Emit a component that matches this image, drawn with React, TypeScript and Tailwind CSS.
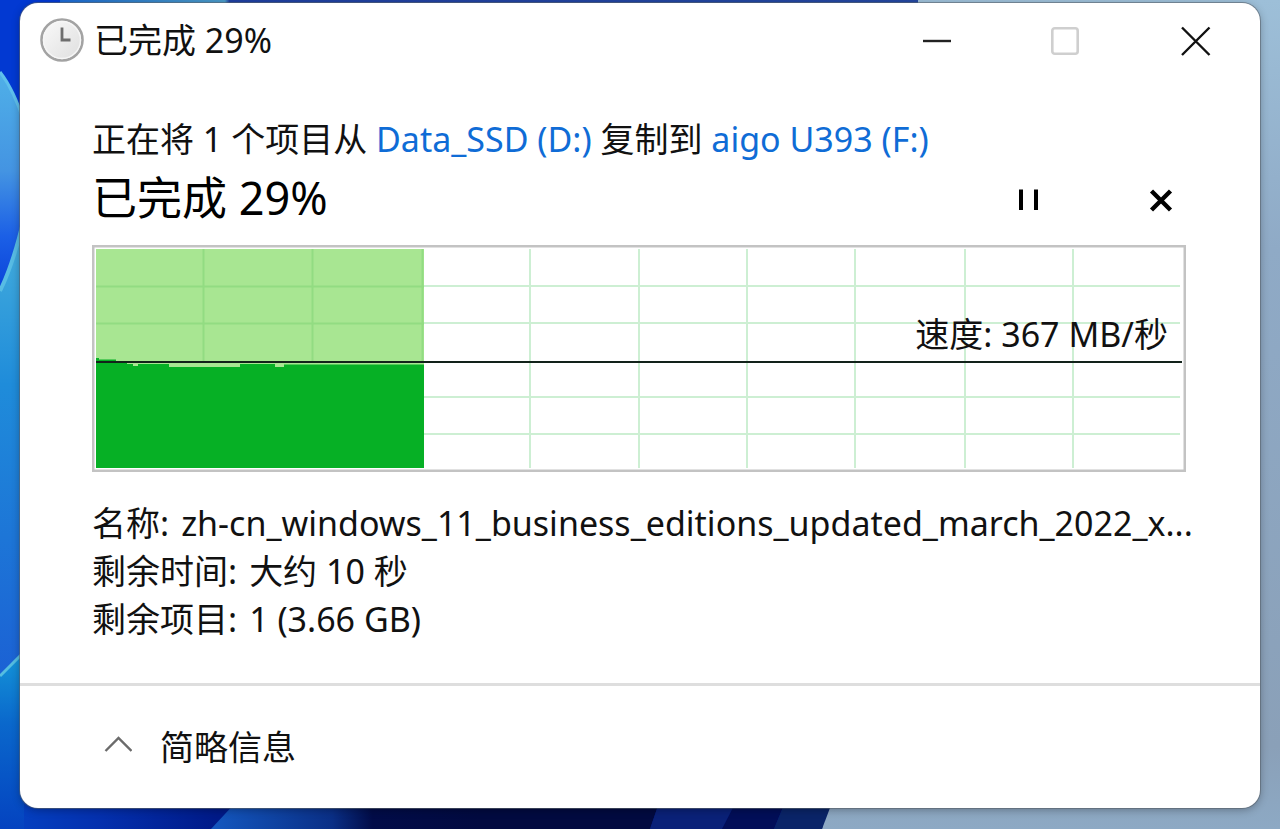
import React, { useState } from 'react';
import { clsx } from 'clsx';

const transfer = {
  progress: 29,
  source: 'Data_SSD (D:)',
  target: 'aigo U393 (F:)',
  speed: '367 MB/秒',
};

const details = [
  { label: '名称:', value: 'zh-cn_windows_11_business_editions_updated_march_2022_x...' },
  { label: '剩余时间:', value: '大约 10 秒' },
  { label: '剩余项目:', value: '1 (3.66 GB)' },
];

const columns = [111, 220, 329, 438, 547, 655, 763, 873, 981];
const rows = [41, 78, 152, 189];

function Wallpaper() {
  return (
    <svg
      className="absolute inset-0 h-full w-full"
      viewBox="0 0 1280 829"
      preserveAspectRatio="none"
      aria-hidden="true"
    >
      <defs>
        <linearGradient id="sky" x1="0" y1="0" x2="0" y2="1">
          <stop offset="0" stopColor="#9dbfd8" />
          <stop offset="0.3" stopColor="#8faac6" />
          <stop offset="0.9" stopColor="#8aa0b8" />
          <stop offset="1" stopColor="#8da9c4" />
        </linearGradient>
        <linearGradient id="topEdge" x1="0" y1="0" x2="1" y2="0">
          <stop offset="0" stopColor="#0a55e0" />
          <stop offset="0.12" stopColor="#2a78c8" />
          <stop offset="0.245" stopColor="#4a9ac8" />
          <stop offset="0.25" stopColor="#1f3fa0" />
          <stop offset="1" stopColor="#2448a0" />
        </linearGradient>
        <linearGradient id="bottomEdge" x1="0" y1="0" x2="1" y2="0">
          <stop offset="0" stopColor="#0443c4" />
          <stop offset="0.12" stopColor="#0430ae" />
          <stop offset="0.26" stopColor="#001a88" />
        </linearGradient>
        <linearGradient id="petal" x1="0" y1="0" x2="1" y2="0">
          <stop offset="0" stopColor="#1458c0" />
          <stop offset="0.45" stopColor="#0a2f86" />
          <stop offset="0.6" stopColor="#020c48" />
          <stop offset="1" stopColor="#020a40" />
        </linearGradient>
        <linearGradient id="leafTop" x1="0" y1="0" x2="0" y2="1">
          <stop offset="0" stopColor="#4fb0e8" />
          <stop offset="0.45" stopColor="#4494e2" />
          <stop offset="0.75" stopColor="#1b5fe6" />
          <stop offset="1" stopColor="#0a42d8" />
        </linearGradient>
        <linearGradient id="leafMiddle" x1="0" y1="0" x2="0" y2="1">
          <stop offset="0" stopColor="#48b0dc" />
          <stop offset="0.35" stopColor="#1f8cda" />
          <stop offset="1" stopColor="#1b5fd4" />
        </linearGradient>
        <linearGradient id="leafBottom" x1="0" y1="0" x2="0" y2="1">
          <stop offset="0" stopColor="#1596d8" />
          <stop offset="0.4" stopColor="#0a68cc" />
          <stop offset="1" stopColor="#0443c0" />
        </linearGradient>
      </defs>
      <rect width="1280" height="829" fill="url(#sky)" />
      <path d="M0 0H918V12H0Z" fill="url(#topEdge)" />
      <path d="M0 0H60V130H0Z" fill="#0239d2" />
      <path d="M0 780H833L822 829H0Z" fill="url(#bottomEdge)" />
      <path d="M238 800H480V829H211Z" fill="url(#petal)" />
      <path d="M480 800H660L650 829H480Z" fill="#020a40" />
      <path d="M660 800H737L722 829H650Z" fill="#0a2178" />
      <path d="M737 800H786L774 829H722Z" fill="#020e58" />
      <path d="M786 800H833L822 829H774Z" fill="#0a2468" />
      <path d="M0 72Q14 90 24 122V230Q14 262 0 292Z" fill="url(#leafTop)" />
      <path d="M0 72Q14 90 24 122" fill="none" stroke="#5fc0ec" strokeWidth="3" />
      <path d="M0 290V690L24 660V220Q12 262 0 290Z" fill="url(#leafMiddle)" />
      <path d="M0 291Q14 262 24 218" fill="none" stroke="#58bce4" strokeWidth="4" />
      <path d="M0 676L24 652V829H0Z" fill="url(#leafBottom)" />
      <path d="M0 676Q10 666 24 652" fill="none" stroke="#55bde0" strokeWidth="3" />
    </svg>
  );
}

function ClockIcon() {
  return (
    <svg className="h-11 w-11 shrink-0" viewBox="0 0 44 44" fill="none" aria-hidden="true">
      <defs>
        <linearGradient id="dial" x1="0" y1="0" x2="1" y2="1">
          <stop offset="0" stopColor="#fafafa" />
          <stop offset="1" stopColor="#dedede" />
        </linearGradient>
      </defs>
      <circle cx="22" cy="22" r="20.5" fill="url(#dial)" stroke="#a3a3a3" strokeWidth="2.6" />
      <circle cx="22" cy="22" r="18.5" stroke="#f6f6f6" strokeWidth="1.4" />
      <path d="M22 9.5V22H30.5" stroke="#6e6e6e" strokeWidth="2.8" />
    </svg>
  );
}

function SpeedChart() {
  return (
    <div className="relative mt-3">
      <svg
        className="block h-[227px] w-full"
        viewBox="0 0 1094 227"
        preserveAspectRatio="none"
        role="img"
        aria-label={`速度: ${transfer.speed}`}
      >
        <rect x="1.25" y="1.25" width="1091.5" height="224.5" fill="#fff" stroke="#c3c3c3" strokeWidth="2.5" />
        <g stroke="#cdefd3" strokeWidth="2">
          {columns.map(x => <path key={x} d={`M${x} 4V223`} />)}
          {rows.map(y => <path key={y} d={`M4 ${y}H1088`} />)}
        </g>
        <rect x="4" y="4" width="328" height="219" fill="#a8e692" />
        <g stroke="#92dc82" strokeWidth="2">
          <path d="M111.5 4V117M220.5 4V117M330.5 4V117" />
          <path d="M4 41.5H332M4 78.5H332" />
        </g>
        <path
          d="M4 113H7V114.5H24V116.5H35V119H41V121H46V119H77V122H148V119H183V122H192V119.5H332V223H4Z"
          fill="#06b025"
        />
        <path d="M4 117H1090" stroke="#12221a" strokeWidth="2.2" />
      </svg>
      <p className="absolute right-[18px] top-[65px] leading-[48px]">速度: {transfer.speed}</p>
    </div>
  );
}

export default function App() {
  const [paused, setPaused] = useState(false);
  const [expanded, setExpanded] = useState(true);

  const captionButton = 'flex w-[129px] items-center justify-center';

  return (
    <div className="relative flex min-h-screen flex-col overflow-hidden px-5 pb-[21px] pt-[3px] font-['Noto_Sans','Noto_Sans_CJK_SC',sans-serif] text-[34px] text-[#111]">
      <Wallpaper />

      <main className="relative flex flex-1 flex-col rounded-[18px] bg-white shadow-[0_0_0_1px_rgba(90,100,110,0.6),0_2px_8px_rgba(0,0,0,0.3)]">
        {/* Title bar */}
        <header className="flex h-[74px] items-stretch justify-between">
          <div className="flex items-center gap-[10px] pl-5">
            <ClockIcon />
            <h1 className="leading-[48px]">已完成 {transfer.progress}%</h1>
          </div>
          <div className="flex">
            <button className={captionButton} aria-label="最小化">
              <svg className="h-8 w-8" viewBox="0 0 32 32" fill="none">
                <path d="M1 17H29" stroke="#222" strokeWidth="2.4" />
              </svg>
            </button>
            <button className={captionButton} aria-label="最大化" disabled>
              <svg className="h-8 w-8" viewBox="0 0 32 32" fill="none">
                <rect x="1.3" y="4.3" width="25.4" height="25.4" rx="2.5" stroke="#cfcfcf" strokeWidth="2.6" />
              </svg>
            </button>
            <button className={captionButton} aria-label="关闭">
              <svg className="h-8 w-8" viewBox="0 0 32 32" fill="none">
                <path d="M2 3.5L29.5 31M29.5 3.5L2 31" stroke="#111" strokeWidth="2.4" />
              </svg>
            </button>
          </div>
        </header>

        <section className="mt-[38px] pl-[72px] pr-[74px]">
          <p className="whitespace-nowrap leading-[48px]">
            正在将 1 个项目从{' '}
            <a href="#source" className="text-[#0f6cd6]">{transfer.source}</a>
            {' '}复制到{' '}
            <a href="#target" className="text-[#0f6cd6]">{transfer.target}</a>
          </p>

          <div className="flex h-[70px] items-center justify-between">
            <h2 className="text-[45px] leading-[70px] text-black">已完成 {transfer.progress}%</h2>
            <div className="flex gap-[88px] pr-[3px] pt-1">
              <button
                className="flex h-11 w-11 items-center justify-center"
                aria-label={paused ? '继续' : '暂停'}
                onClick={() => setPaused(!paused)}
              >
                <svg className="h-6 w-6" viewBox="0 0 24 24" fill="#000">
                  {paused ? <path d="M5 2L20 12L5 22Z" /> : <path d="M2 1.5H6V22H2ZM17 1.5H21V22H17Z" />}
                </svg>
              </button>
              <button className="flex h-11 w-11 items-center justify-center" aria-label="取消">
                <svg className="h-6 w-6" viewBox="0 0 24 24" fill="none">
                  <path d="M2.5 3L21.5 22M21.5 3L2.5 22" stroke="#000" strokeWidth="4.4" />
                </svg>
              </button>
            </div>
          </div>

          <SpeedChart />

          {expanded && (
            <dl className="mt-[27px] leading-[48px]">
              {details.map(item => (
                <div key={item.label} className="flex gap-3 whitespace-nowrap">
                  <dt>{item.label}</dt>
                  <dd>{item.value}</dd>
                </div>
              ))}
            </dl>
          )}
        </section>

        <footer className="mt-10 flex flex-1 items-center border-t-3 border-[#dedede] pl-[84px]">
          <button
            className="flex items-center gap-7 leading-[48px]"
            aria-expanded={expanded}
            onClick={() => setExpanded(!expanded)}
          >
            <svg className={clsx('h-7 w-7', !expanded && 'rotate-180')} viewBox="0 0 28 28" fill="none">
              <path d="M1.5 18L14.5 5L27.5 18" stroke="#6b6b6b" strokeWidth="2.4" />
            </svg>
            简略信息
          </button>
        </footer>
      </main>
    </div>
  );
}
